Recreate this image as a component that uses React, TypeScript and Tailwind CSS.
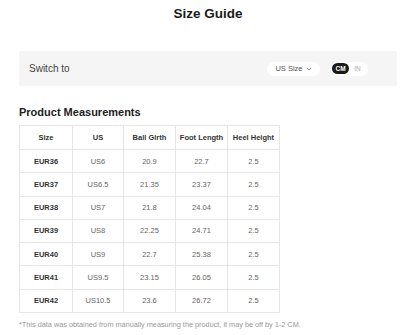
import React from "react";

const rows = [
  ["EUR36", "US6", "20.9", "22.7", "2.5"],
  ["EUR37", "US6.5", "21.35", "23.37", "2.5"],
  ["EUR38", "US7", "21.8", "24.04", "2.5"],
  ["EUR39", "US8", "22.25", "24.71", "2.5"],
  ["EUR40", "US9", "22.7", "25.38", "2.5"],
  ["EUR41", "US9.5", "23.15", "26.05", "2.5"],
  ["EUR42", "US10.5", "23.6", "26.72", "2.5"],
];

const headers = ["Size", "US", "Ball Girth", "Foot Length", "Heel Height"];
const widths = ["w-[53px]", "w-[51px]", "w-[52px]", "w-[52px]", "w-[52px]"];

export default function App() {
  const [unit, setUnit] = React.useState<"CM" | "IN">("CM");

  return (
    <div className="w-[416px] h-[335px] overflow-hidden bg-white px-[19px] font-['Liberation_Sans',Arial,sans-serif]">
      <h1 className="pt-[6px] text-center text-[13.5px] font-bold leading-[16px] text-[#1a1a1a]">
        Size Guide
      </h1>

      <div className="mt-[29px] flex h-[35px] items-center justify-between bg-[#f5f5f5] pl-[10px] pr-[29px]">
        <span className="text-[10px] text-[#444]">Switch to</span>
        <div className="flex items-center gap-[11px]">
          <button
            type="button"
            className="flex h-[14px] w-[53px] items-center justify-center gap-[3px] rounded-full bg-white text-[7.5px] text-[#555]"
          >
            <span>US Size</span>
            <svg width="6" height="4" viewBox="0 0 6 4" fill="none" stroke="#777" strokeWidth="0.8">
              <path d="M0.8 0.8 L3 3 L5.2 0.8" />
            </svg>
          </button>
          <div className="flex h-[14px] w-[37px] items-center rounded-full bg-white pl-[1px]">
            <button
              type="button"
              onClick={() => setUnit("CM")}
              className={`flex h-[11px] w-[17px] items-center justify-center rounded-full text-[6.5px] font-bold ${
                unit === "CM" ? "bg-[#1a1a1a] text-white" : "text-[#aaa]"
              }`}
            >
              CM
            </button>
            <button
              type="button"
              onClick={() => setUnit("IN")}
              className={`flex h-[11px] w-[17px] items-center justify-center rounded-full text-[6.5px] ${
                unit === "IN" ? "bg-[#1a1a1a] font-bold text-white" : "text-[#aaa]"
              }`}
            >
              IN
            </button>
          </div>
        </div>
      </div>

      <h2 className="mt-[19px] text-[11px] font-bold leading-[14px] text-[#222]">
        Product Measurements
      </h2>

      <table className="mt-[6px] border-collapse text-center text-[7.5px]">
        <thead>
          <tr>
            {headers.map((h, i) => (
              <th
                key={h}
                className={`${widths[i]} h-[24px] border border-[#e6e6e6] p-0 font-bold text-[#333]`}
              >
                {h}
              </th>
            ))}
          </tr>
        </thead>
        <tbody>
          {rows.map((r) => (
            <tr key={r[0]}>
              {r.map((c, i) => (
                <td
                  key={i}
                  className={`h-[23.3px] border border-[#e6e6e6] p-0 ${
                    i === 0 ? "font-bold text-[#333]" : "text-[#666]"
                  }`}
                >
                  {c}
                </td>
              ))}
            </tr>
          ))}
        </tbody>
      </table>

      <p className="mt-[7px] text-[7.3px] leading-[10px] text-[#999]">
        *This data was obtained from manually measuring the product, it may be off by 1-2 CM.
      </p>
    </div>
  );
}
